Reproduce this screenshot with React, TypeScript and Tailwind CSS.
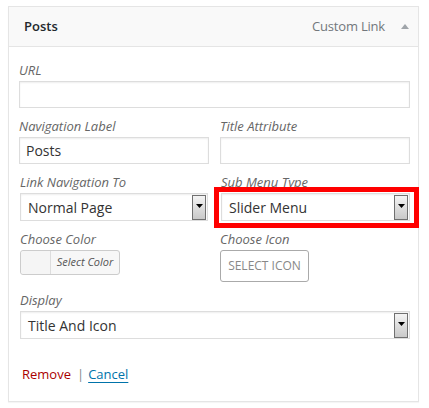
import type { ReactNode } from 'react';

function Label({ children }: { children: ReactNode }) {
  return <div className="h-4 text-[13px] leading-4 italic text-[#666] mb-[3px]">{children}</div>;
}

function TextBox({ value = '' }: { value?: string }) {
  return (
    <div className="h-[27px] border border-[#ddd] shadow-[inset_0_1px_2px_rgba(0,0,0,0.07)] bg-white px-[6px] flex items-center text-[14px] text-[#333]">
      {value}
    </div>
  );
}

function Select({ value }: { value: string }) {
  return (
    <div className="h-[28px] border border-[#ddd] shadow-[inset_0_1px_2px_rgba(0,0,0,0.07)] bg-white pl-[7px] pr-px flex items-center text-[14px] text-[#333]">
      <span className="flex-1">{value}</span>
      {/* old-style dropdown button */}
      <span className="w-[14px] h-[25px] border border-[#707070] bg-gradient-to-b from-[#f4f4f4] to-[#c9c9c9] flex justify-center pt-[8px]">
        <svg width="7" height="4" viewBox="0 0 7 4">
          <path d="M0 0h7L3.5 4z" fill="#000" />
        </svg>
      </span>
    </div>
  );
}

export default function App() {
  return (
    <div className="w-[429px] h-[408px] bg-white pt-[6px] pl-[8px] font-['Open_Sans',sans-serif]">
      <div className="w-[411px] h-[396px] border border-[#e5e5e5] shadow-[0_1px_1px_rgba(0,0,0,0.04)]">
        {/* header */}
        <div className="h-[40px] bg-[#f9f9f9] border-b border-[#e5e5e5] flex items-center pl-[15px] pr-[9px]">
          <span className="flex-1 text-[13px] font-semibold text-[#23282d]">Posts</span>
          <span className="text-[13px] text-[#72777c] tracking-[-0.2px]">Custom Link</span>
          <svg className="ml-[16px]" width="8" height="5" viewBox="0 0 8 5">
            <path d="M0 5L4 0l4 5z" fill="#a0a5aa" />
          </svg>
        </div>

        <div className="pl-[10px] pr-[8px] pt-[15px]">
          <Label>URL</Label>
          <TextBox />

          <div className="grid grid-cols-2 gap-x-[11px] mt-[10px]">
            <div>
              <Label>Navigation Label</Label>
              <TextBox value="Posts" />
            </div>
            <div>
              <Label>Title Attribute</Label>
              <TextBox />
            </div>
          </div>

          <div className="grid grid-cols-2 gap-x-[11px] mt-[10px]">
            <div className="pl-px pr-px">
              <Label>Link Navigation To</Label>
              <Select value="Normal Page" />
            </div>
            <div className="pl-px">
              <Label>Sub Menu Type</Label>
              <div className="relative">
                <Select value="Slider Menu" />
                <div className="absolute -left-[7px] -right-[9px] -top-[6px] -bottom-[7px] border-[5px] border-[#f00]" />
              </div>
            </div>
          </div>

          <div className="grid grid-cols-2 gap-x-[11px] mt-[10px]">
            <div className="pl-px">
              <Label>Choose Color</Label>
              <div className="w-[100px] h-[25px] rounded-[3px] border border-[#ccc] bg-[#f7f7f7] flex">
                <span className="w-[30px] bg-[#f5f5f5] border-r border-[#ddd] rounded-l-[3px]" />
                <span className="flex-1 flex items-center justify-center text-[11px] italic text-[#555]">Select Color</span>
              </div>
            </div>
            <div>
              <Label>Choose Icon</Label>
              <div className="w-[89px] h-[32px] rounded-[3px] border border-[#aaa] bg-white flex items-center justify-center text-[12px] text-[#888]">
                SELECT ICON
              </div>
            </div>
          </div>

          <div className="mt-[10px] pl-px">
            <Label>Display</Label>
            <Select value="Title And Icon" />
          </div>

          <div className="mt-[26px] pl-[3px] flex items-center text-[13px]">
            <span className="text-[#a00]">Remove</span>
            <span className="ml-[6px] mr-[4px] text-[#82878c]">|</span>
            <span className="text-[#0073aa] underline underline-offset-[3px]">Cancel</span>
          </div>
        </div>
      </div>
    </div>
  );
}
